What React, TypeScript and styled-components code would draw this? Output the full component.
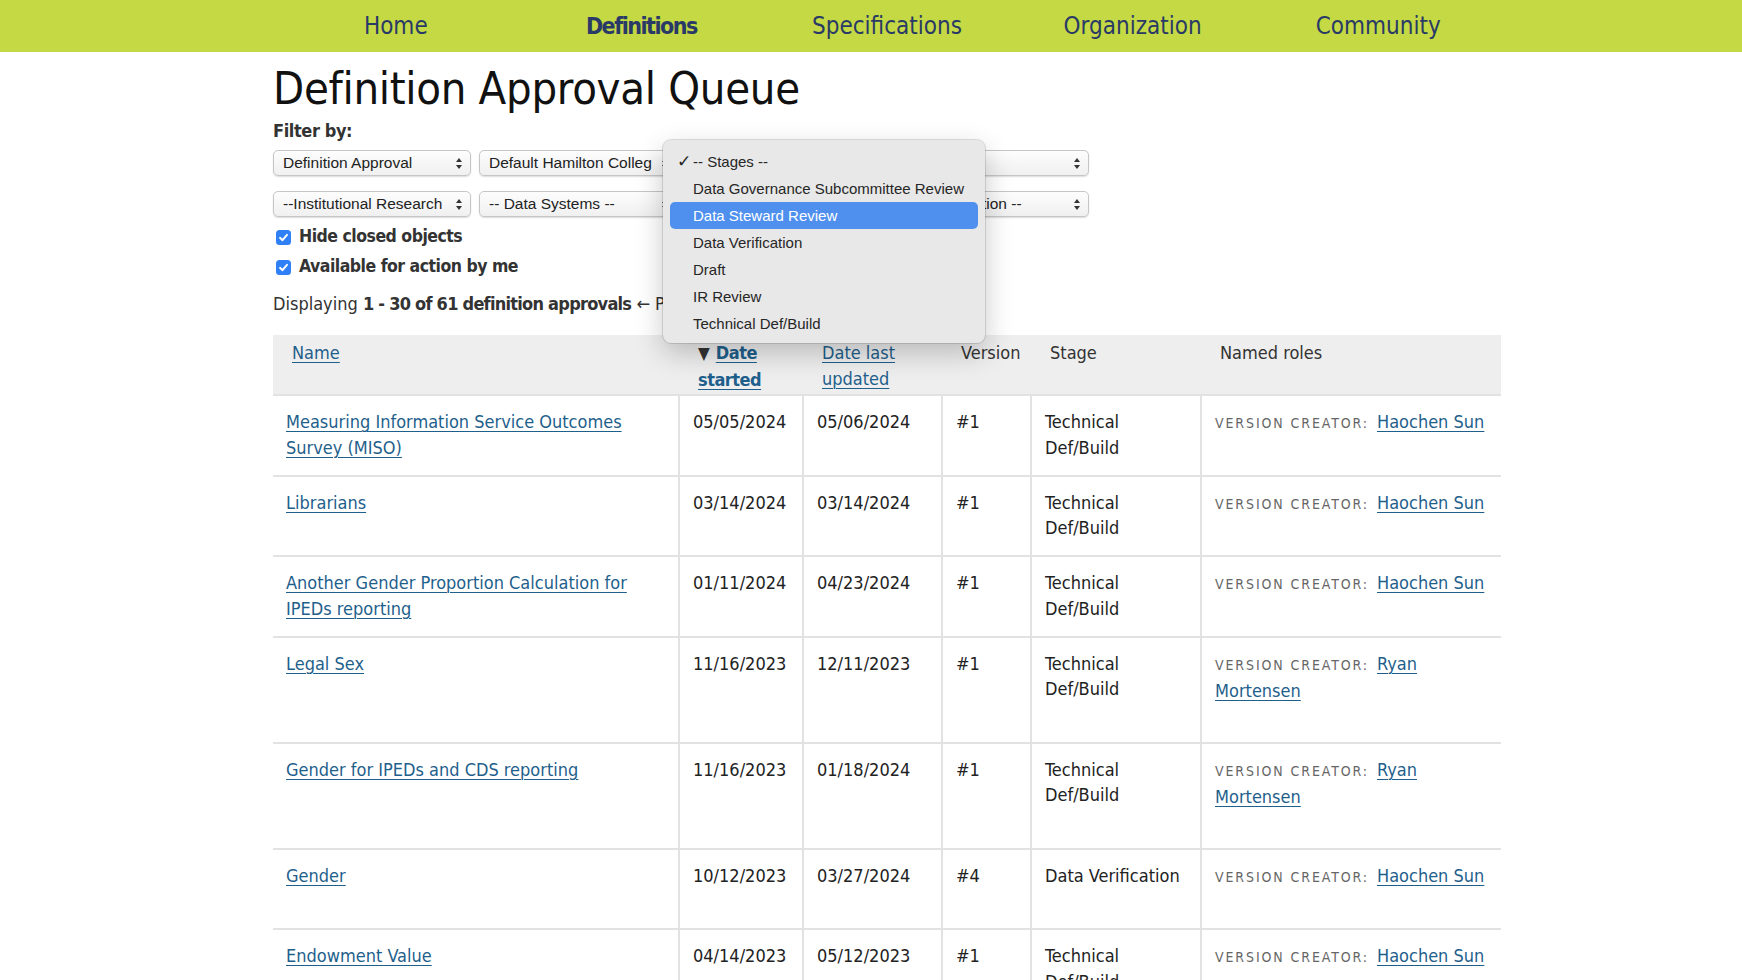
import styled, { createGlobalStyle } from "styled-components"

const GlobalStyle = createGlobalStyle`
    body{
        margin: 0;
        background: #ffffff;
        font-family: "DejaVu Sans Condensed", "DejaVu Sans", sans-serif;
        color: #1e1e1e;
    }
`

const NavBar = styled.nav`
    background-color: #c4d943;
    height: 52px;
    padding-left: 32px;
`
const NavInner = styled.div`
    width: 1228px;
    margin: 0 auto;
    height: 100%;
    display: grid;
    grid-template-columns: repeat(5, 1fr);
    align-items: center;
`
const NavItem = styled.a<{ $active?: boolean }>`
    text-align: center;
    font-size: ${props => props.$active ? 23 : 24}px;
    letter-spacing: ${props => props.$active ? "-1.5px" : "0"};
    color: #2a3a66;
    font-weight: ${props => props.$active ? "bold" : "normal"};
    text-decoration: none;
`

const Page = styled.div`
    padding-left: 32px;
`
const Container = styled.main`
    width: 1228px;
    margin: 0 auto;
`
const Title = styled.h1`
    font-size: 45px;
    font-weight: normal;
    line-height: 46px;
    letter-spacing: -0.3px;
    color: #111;
    margin: 14px 0 0 0;
`
const FilterLabel = styled.div`
    font-size: 18px;
    font-weight: bold;
    letter-spacing: -0.4px;
    line-height: 25px;
    color: #333;
    margin-top: 6px;
`
const SelectRow = styled.div`
    display: flex;
    gap: 8px;
`
const SelectRows = styled.div`
    display: flex;
    flex-direction: column;
    gap: 15px;
    margin-top: 7px;
`
const SelectWrap = styled.div`
    position: relative;
`
const SelectBox = styled.div`
    width: 198px;
    height: 26px;
    box-sizing: border-box;
    border: 1px solid #c6c6c6;
    border-radius: 5px;
    background: linear-gradient(#fdfdfd, #f0f0f0);
    box-shadow: 0 1px 1.5px rgba(0,0,0,0.14);
    display: flex;
    align-items: center;
    padding: 0 7px 0 9px;
    font-family: "Liberation Sans", Arial, sans-serif;
    font-size: 15.5px;
    color: #222;
`
const SelectText = styled.span`
    flex: 1;
    overflow: hidden;
    white-space: nowrap;
`
const Arrows = styled.svg`
    flex: none;
    margin-left: 4px;
`

const Menu = styled.div`
    position: absolute;
    left: -22px;
    top: -10px;
    width: 322px;
    box-sizing: border-box;
    padding: 8px 7px 6px;
    background: #e8e8e8;
    border-radius: 8px;
    box-shadow: 0 10px 28px rgba(0,0,0,0.22), 0 0 0 1px rgba(0,0,0,0.12);
    z-index: 10;
    font-family: "Liberation Sans", Arial, sans-serif;
    font-size: 15px;
`
const MenuItem = styled.div<{ $selected?: boolean }>`
    position: relative;
    height: 27px;
    line-height: 27px;
    padding-left: 23px;
    border-radius: 5px;
    color: ${props => props.$selected ? "#ffffff" : "#262626"};
    background: ${props => props.$selected ? "#4f90ef" : "transparent"};
`
const Check = styled.span`
    position: absolute;
    left: 7px;
    top: 0;
    font-size: 17px;
    font-family: "DejaVu Sans", sans-serif;
`

const CheckRows = styled.div`
    margin-top: 4px;
`
const CheckRow = styled.label`
    display: flex;
    align-items: center;
    gap: 8px;
    height: 30px;
    font-size: 17.5px;
    letter-spacing: -0.5px;
    font-weight: bold;
    color: #333;
    padding-left: 3px;
`
const Box = styled.span`
    width: 15px;
    height: 15px;
    border-radius: 3.5px;
    background: #2f7ff6;
    display: flex;
    align-items: center;
    justify-content: center;
    margin-top: 3px;
`

const Summary = styled.div`
    font-size: 18px;
    line-height: 25px;
    color: #333;
    margin-top: 10px;
    b{
        letter-spacing: -0.75px;
    }
`

const Table = styled.table`
    width: 1228px;
    table-layout: fixed;
    border-collapse: collapse;
    margin-top: 19px;
    font-size: 18px;
    line-height: 25.5px;
`
const HeadCell = styled.th`
    background: #eeeeee;
    text-align: left;
    font-weight: normal;
    vertical-align: top;
    padding: 5px 19px 2px;
    color: #333;
`
const Cell = styled.td`
    vertical-align: top;
    padding: 13px 13px 12.5px;
    border-top: 2px solid #e2e2e2;
    border-left: 2px solid #e2e2e2;
    color: #222;
    &:first-child{
        border-left: none;
    }
    &:last-child{
        padding-right: 6px;
    }
`
const Link = styled.a<{ $bold?: boolean }>`
    color: #1f5f8c;
    text-decoration: underline;
    text-decoration-thickness: 1px;
    text-underline-offset: 3px;
    font-weight: ${props => props.$bold ? "bold" : "normal"};
    letter-spacing: ${props => props.$bold ? "-0.5px" : "0"};
`
const Sort = styled.span`
    font-size: 17px;
    color: #333;
    margin-right: 6px;
`
const RoleLabel = styled.span`
    font-size: 14px;
    letter-spacing: 1.9px;
    text-transform: uppercase;
    color: #666;
    margin-right: 8px;
`
const Spacer = styled.div`
    height: 25.5px;
`

const UpDown = () => (
    <Arrows width="8" height="13" viewBox="0 0 8 13">
        <path d="M4 1 L7 5 L1 5 Z" fill="#333" />
        <path d="M4 12 L7 8 L1 8 Z" fill="#333" />
    </Arrows>
)

const Select = ({ label, children }: { label: string, children?: React.ReactNode }) => (
    <SelectWrap>
        <SelectBox>
            <SelectText>{label}</SelectText>
            <UpDown />
        </SelectBox>
        {children}
    </SelectWrap>
)

const CheckBox = () => (
    <Box>
        <svg width="11" height="11" viewBox="0 0 11 11">
            <path d="M2 5.8 L4.5 8.2 L9 2.8" fill="none" stroke="#fff" strokeWidth="1.9" strokeLinecap="round" strokeLinejoin="round" />
        </svg>
    </Box>
)

const stages = [
    "-- Stages --",
    "Data Governance Subcommittee Review",
    "Data Steward Review",
    "Data Verification",
    "Draft",
    "IR Review",
    "Technical Def/Build"
]

const rows = [
    { name: "Measuring Information Service Outcomes Survey (MISO)", started: "05/05/2024", updated: "05/06/2024", version: "#1", stage: "Technical Def/Build", creator: "Haochen Sun" },
    { name: "Librarians", started: "03/14/2024", updated: "03/14/2024", version: "#1", stage: "Technical Def/Build", creator: "Haochen Sun" },
    { name: "Another Gender Proportion Calculation for IPEDs reporting", started: "01/11/2024", updated: "04/23/2024", version: "#1", stage: "Technical Def/Build", creator: "Haochen Sun" },
    { name: "Legal Sex", started: "11/16/2023", updated: "12/11/2023", version: "#1", stage: "Technical Def/Build", creator: "Ryan Mortensen" },
    { name: "Gender for IPEDs and CDS reporting", started: "11/16/2023", updated: "01/18/2024", version: "#1", stage: "Technical Def/Build", creator: "Ryan Mortensen" },
    { name: "Gender", started: "10/12/2023", updated: "03/27/2024", version: "#4", stage: "Data Verification", creator: "Haochen Sun" },
    { name: "Endowment Value", started: "04/14/2023", updated: "05/12/2023", version: "#1", stage: "Technical Def/Build", creator: "Haochen Sun" },
]

const App = () => {
    return (
        <>
            <GlobalStyle />
            <NavBar>
                <NavInner>
                    <NavItem>Home</NavItem>
                    <NavItem $active>Definitions</NavItem>
                    <NavItem>Specifications</NavItem>
                    <NavItem>Organization</NavItem>
                    <NavItem>Community</NavItem>
                </NavInner>
            </NavBar>
            <Page>
                <Container>
                    <Title>Definition Approval Queue</Title>
                    <FilterLabel>Filter by:</FilterLabel>
                    <SelectRows>
                        <SelectRow>
                            <Select label="Definition Approval" />
                            <Select label="Default Hamilton Colleg" />
                            <Select label="-- Stages --">
                                <Menu>
                                    {stages.map(s => (
                                        <MenuItem key={s} $selected={s === "Data Steward Review"}>
                                            {s === "-- Stages --" && <Check>✓</Check>}
                                            {s}
                                        </MenuItem>
                                    ))}
                                </Menu>
                            </Select>
                            <Select label="-- Status --" />
                        </SelectRow>
                        <SelectRow>
                            <Select label="--Institutional Research" />
                            <Select label="-- Data Systems --" />
                            <Select label="-- Data Stewards --" />
                            <Select label="-- Classification --" />
                        </SelectRow>
                    </SelectRows>
                    <CheckRows>
                        <CheckRow><CheckBox />Hide closed objects</CheckRow>
                        <CheckRow><CheckBox />Available for action by me</CheckRow>
                    </CheckRows>
                    <Summary>
                        Displaying <b>1 - 30 of 61 definition approvals</b> ← Previous
                    </Summary>
                    <Table>
                        <colgroup>
                            <col style={{ width: 406 }} />
                            <col style={{ width: 124 }} />
                            <col style={{ width: 139 }} />
                            <col style={{ width: 89 }} />
                            <col style={{ width: 170 }} />
                            <col style={{ width: 300 }} />
                        </colgroup>
                        <thead>
                            <tr>
                                <HeadCell><Link>Name</Link></HeadCell>
                                <HeadCell><Sort>▼</Sort><Link $bold>Date started</Link></HeadCell>
                                <HeadCell><Link>Date last updated</Link></HeadCell>
                                <HeadCell>Version</HeadCell>
                                <HeadCell>Stage</HeadCell>
                                <HeadCell>Named roles</HeadCell>
                            </tr>
                        </thead>
                        <tbody>
                            {rows.map(r => (
                                <tr key={r.name}>
                                    <Cell><Link>{r.name}</Link></Cell>
                                    <Cell>{r.started}</Cell>
                                    <Cell>{r.updated}</Cell>
                                    <Cell>{r.version}</Cell>
                                    <Cell>{r.stage}</Cell>
                                    <Cell>
                                        <RoleLabel>Version creator:</RoleLabel>
                                        <Link>{r.creator}</Link>
                                        <Spacer />
                                    </Cell>
                                </tr>
                            ))}
                        </tbody>
                    </Table>
                </Container>
            </Page>
        </>
    )
}

export default App
